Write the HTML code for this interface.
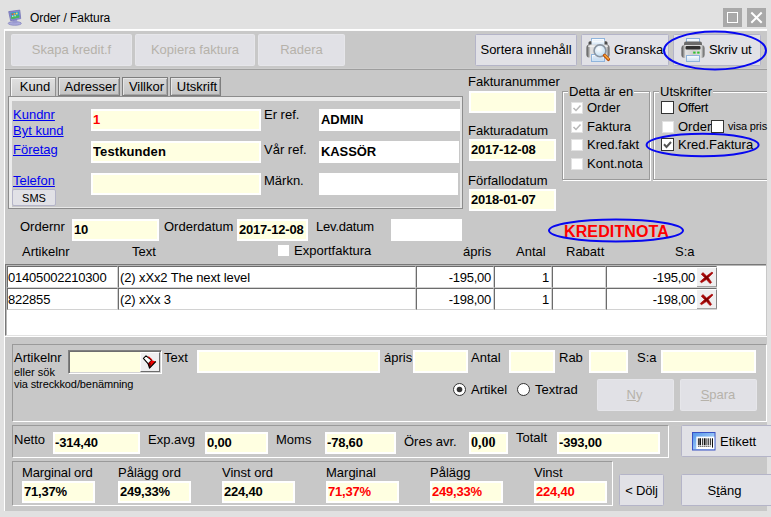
<!DOCTYPE html>
<html>
<head>
<meta charset="utf-8">
<title>Order / Faktura</title>
<style>
html,body{margin:0;padding:0;}
body{width:771px;height:517px;overflow:hidden;background:#e1e1e1;font-family:"Liberation Sans",sans-serif;font-size:13px;color:#000;position:relative;}
*{box-sizing:border-box;}
.a{position:absolute;white-space:nowrap;}
.l{position:absolute;white-space:nowrap;line-height:15px;height:15px;font-size:13px;}
.s{font-size:11px;line-height:12px;height:12px;}
.lk{color:#0000f0;text-decoration:underline;}
.in{position:absolute;background:#ffffe1;border:2px solid #fff;font-weight:bold;font-size:13px;line-height:17px;padding-left:0;white-space:nowrap;overflow:hidden;letter-spacing:-.2px;}
.w{background:#fff;}
.red{color:#f00;}
.btn{position:absolute;background:#e1e1e6;border:1px solid #b4b4c8;border-radius:1.5px;text-align:center;font-size:13px;white-space:nowrap;}
.dis{color:#b6b2aa;border-color:#e6e6ea;}
.pan{position:absolute;border:1px solid;border-color:#9a9a9a #fff #fff #9a9a9a;}
.cell{position:absolute;background:#fff;border:1px solid;border-color:#6c6c6c #d2d2d2 #d2d2d2 #6c6c6c;font-size:13px;line-height:17px;height:22px;padding:2px 2px 0 1px;white-space:nowrap;overflow:hidden;}
.r{letter-spacing:-.25px;}
.r{text-align:right;}
.cb{position:absolute;width:13px;height:13px;background:#fff;border:1px solid #333;}
.cbd{position:absolute;width:12px;height:12px;background:#fff;border:1px solid #e2e2e2;}
.tab{position:absolute;top:77px;height:19px;border:1px solid #7e7e7e;font-size:13px;line-height:17px;text-align:center;padding-left:3px;background:linear-gradient(#d8d8d8,#c4c4c4);box-shadow:inset 1px 1px 0 #e6e6e6, inset -1px -1px 0 #a6a6a6;}
</style>
</head>
<body>
<!-- title bar -->
<svg class="a" style="left:7px;top:9px" width="16" height="18" viewBox="7 9 16 18">
  <ellipse cx="14.8" cy="23.4" rx="6.6" ry="1.9" fill="#a9a9dc" stroke="#7878b4" stroke-width=".6"/>
  <path d="M12.8 20 L17 19.4 L17.6 23 L12.4 23.4 Z" fill="#9a9ad0"/>
  <path d="M8.7 11.6 L19.8 10.1 L20.7 18.6 L10.6 20.7 Z" fill="#8c8cd2" stroke="#6a6ab0" stroke-width=".7" stroke-linejoin="round"/>
  <path d="M10.3 12.8 L18.8 11.6 L19.4 17.6 L11.5 19.2 Z" fill="#2aa0c8"/>
  <path d="M11 16.6 L19.3 15.2 L19.4 17.6 L11.5 19.2 Z" fill="#4ab85a"/>
  <rect x="11.6" y="13.4" width="1.6" height="1.8" fill="#e05040"/><rect x="13.8" y="13" width="1.6" height="1.8" fill="#f0a030"/><rect x="16" y="12.6" width="1.6" height="1.8" fill="#f0e060"/>
  <rect x="12" y="15.6" width="1.4" height="1.2" fill="#fff" opacity=".8"/><rect x="14.4" y="15.2" width="1.4" height="1.2" fill="#fff" opacity=".8"/>
</svg>
<div class="a" style="left:30px;top:11px;font-size:12px;line-height:15px;letter-spacing:-.08px">Order / Faktura</div>
<div class="a" style="left:723px;top:8px;width:19px;height:19px;background:#a9a9a9"></div>
<div class="a" style="left:727px;top:12px;width:11px;height:11px;border:1px solid #fff"></div>
<div class="a" style="left:747px;top:8px;width:19px;height:19px;background:#a9a9a9"></div>
<svg class="a" style="left:747px;top:8px" width="19" height="19"><path d="M4.3 4.5 L14.7 14.7 M14.7 4.5 L4.3 14.7" stroke="#fff" stroke-width="2" fill="none"/></svg>

<!-- main panel -->
<div class="a" style="left:4px;top:29px;width:763px;height:482px;background:#c8c8c8;border-left:1px solid #fff;border-top:1px solid #fff;"></div>

<div class="a" style="left:5px;top:30px;width:762px;height:1px;background:#fbfbfb"></div>
<!-- toolbar -->
<div class="btn dis" style="left:11px;top:34px;width:121px;height:32px;line-height:30px;">Skapa kredit.f</div>
<div class="btn dis" style="left:135px;top:34px;width:120px;height:32px;line-height:30px;">Kopiera faktura</div>
<div class="btn dis" style="left:258px;top:34px;width:87px;height:32px;line-height:30px;">Radera</div>
<div class="btn" style="left:475px;top:34px;width:102px;height:32px;line-height:30px;">Sortera innehåll</div>
<div class="btn" style="left:581px;top:34px;width:88px;height:32px;line-height:30px;text-align:left;padding-left:32px">Granska</div>
<svg class="a" style="left:586px;top:38px" width="24" height="24" viewBox="0 0 24 24">
 <defs><linearGradient id="pb" x1="0" y1="0" x2="1" y2="0"><stop offset="0" stop-color="#4a4a4a"/><stop offset=".18" stop-color="#e4e4e4"/><stop offset=".5" stop-color="#cfcfcf"/><stop offset=".85" stop-color="#dedede"/><stop offset="1" stop-color="#555"/></linearGradient>
 <linearGradient id="pp" x1="0" y1="0" x2="0" y2="1"><stop offset="0" stop-color="#fff"/><stop offset="1" stop-color="#c4dcf2"/></linearGradient>
 <radialGradient id="gl" cx=".4" cy=".35" r=".7"><stop offset="0" stop-color="#fff"/><stop offset="1" stop-color="#b8d8f0"/></radialGradient></defs>
 <rect x="5.5" y=".5" width="13" height="8" fill="url(#pp)" stroke="#8fb4dc"/>
 <path d="M7 3H17M7 5H17" stroke="#b8d0ea" stroke-width=".7"/>
 <rect x="2.5" y="3.2" width="19" height="7" rx="1.6" fill="#4c4c4c"/>
 <rect x="5.5" y="2.6" width="13" height="5" fill="url(#pp)"/>
 <rect x=".5" y="6.6" width="23" height="13" rx="3.2" fill="url(#pb)"/>
 <rect x="2" y="7.4" width="20" height="1.6" rx=".8" fill="#f4f4f4" opacity=".8"/>
 <rect x="5.5" y="16.5" width="13" height="7" fill="url(#pp)" stroke="#8fb4dc"/>
 <path d="M7 19H17M7 21H17" stroke="#b8d0ea" stroke-width=".7"/>
 <circle cx="14" cy="12.8" r="5.9" fill="url(#gl)" stroke="#8a95a2" stroke-width="1.6"/>
 <path d="M18.6 17.4 L22.4 21.4" stroke="#b84c08" stroke-width="3.3" stroke-linecap="round"/>
 <path d="M18.8 17.2 L22.4 21" stroke="#f8a838" stroke-width="1.5" stroke-linecap="round"/>
</svg>
<div class="btn" style="left:673px;top:34px;width:88px;height:32px;line-height:30px;text-align:left;padding-left:35px;letter-spacing:-.1px">Skriv ut</div>
<svg class="a" style="left:681px;top:38px" width="24" height="24" viewBox="0 0 24 24">
 <rect x="5.5" y=".5" width="13" height="7" fill="url(#pp)" stroke="#8fb4dc"/>
 <rect x="3" y="3.5" width="18" height="8" rx="2" fill="#6a6a6a"/>
 <rect x=".5" y="7" width="23" height="13" rx="3.2" fill="url(#pb)"/>
 <rect x="4.5" y="8" width="15" height="3.6" rx="1" fill="#303030"/>
 <rect x="12.2" y="13.6" width="2.4" height="2" fill="#30c030"/><rect x="16.2" y="13.6" width="2.4" height="2" fill="#30c030"/>
 <rect x="5.5" y="17.5" width="13" height="6" fill="url(#pp)" stroke="#8fb4dc"/>
</svg>
<div class="a" style="left:5px;top:69px;width:762px;height:1px;background:#9e9e9e"></div>
<div class="a" style="left:5px;top:68px;width:762px;height:1px;background:#cdcdcd"></div>

<!-- tabs -->
<div class="a" style="left:8px;top:96px;width:455px;height:113px;border:1px solid #8c8c8c;"></div>
<div class="a" style="left:9px;top:97px;width:453px;height:4px;background:#ebebeb"></div>
<div class="a" style="left:9px;top:97px;width:3px;height:111px;background:#ebebeb"></div>
<div class="a" style="left:460px;top:97px;width:2px;height:111px;background:#e4e4e4"></div>
<div class="a" style="left:9px;top:207px;width:453px;height:1px;background:#e8e8e8"></div>
<div class="tab" style="left:10px;width:46px;padding-left:4px;border-color:#909090;border-bottom:none;box-shadow:inset 1px 1px 0 #f6f6f6;background:linear-gradient(#e0e0e0,#cdcdcd)">Kund</div>
<div class="tab" style="left:58px;width:62px;">Adresser</div>
<div class="tab" style="left:122px;width:46px;">Villkor</div>
<div class="tab" style="left:170px;width:51px;">Utskrift</div>
<div class="l lk" style="left:13px;top:107px">Kundnr</div>
<div class="l lk" style="left:13px;top:123px">Byt kund</div>
<div class="l lk" style="left:13px;top:142px">Företag</div>
<div class="l lk" style="left:13px;top:173px">Telefon</div>
<div class="btn" style="left:12px;top:189px;width:44px;height:17px;font-size:11px;line-height:16px;border-radius:2px">SMS</div>
<div class="in red" style="left:91px;top:109px;width:170px;height:22px">1</div>
<div class="in" style="left:91px;top:141px;width:170px;height:22px;letter-spacing:.1px">Testkunden</div>
<div class="in" style="left:91px;top:173px;width:170px;height:22px"></div>
<div class="l" style="left:264px;top:107px">Er ref.</div>
<div class="l" style="left:264px;top:142px">Vår ref.</div>
<div class="l" style="left:264px;top:173px">Märkn.</div>
<div class="in w" style="left:319px;top:109px;width:141px;height:22px;letter-spacing:-.05px">ADMIN</div>
<div class="in w" style="left:319px;top:141px;width:140px;height:22px;letter-spacing:-.1px">KASSÖR</div>
<div class="in w" style="left:319px;top:173px;width:139px;height:22px"></div>

<!-- faktura fields -->
<div class="l" style="left:468px;top:74px">Fakturanummer</div>
<div class="in" style="left:469px;top:91px;width:87px;height:22px"></div>
<div class="l" style="left:468px;top:123px">Fakturadatum</div>
<div class="in" style="left:469px;top:139px;width:87px;height:22px">2017-12-08</div>
<div class="l" style="left:468px;top:173px">Förfallodatum</div>
<div class="in" style="left:469px;top:189px;width:87px;height:22px">2018-01-07</div>

<!-- group: Detta är en -->
<div class="a" style="left:562px;top:91px;width:88px;height:89px;border:1px solid #9a9a9a;box-shadow:inset 1px 1px 0 #fff,1px 1px 0 #fff"></div>
<div class="l" style="left:568px;top:84px;background:#c8c8c8;padding:0 1px">Detta är en</div>
<div class="cbd" style="left:571px;top:102px"></div>
<div class="cbd" style="left:571px;top:121px"></div>
<div class="cbd" style="left:571px;top:139px"></div>
<div class="cbd" style="left:571px;top:158px"></div>
<svg class="a" style="left:571px;top:102px" width="12" height="12"><path d="M2.5 6 L5 8.5 L9.5 3.5" stroke="#b8b8b8" stroke-width="1.5" fill="none"/></svg>
<svg class="a" style="left:571px;top:121px" width="12" height="12"><path d="M2.5 6 L5 8.5 L9.5 3.5" stroke="#b8b8b8" stroke-width="1.5" fill="none"/></svg>
<div class="l" style="left:587px;top:100px">Order</div>
<div class="l" style="left:587px;top:119px">Faktura</div>
<div class="l" style="left:587px;top:137px">Kred.fakt</div>
<div class="l" style="left:587px;top:156px">Kont.nota</div>

<!-- group: Utskrifter -->
<div class="a" style="left:653px;top:91px;width:114px;height:89px;border:1px solid #9a9a9a;border-right:none;box-shadow:inset 1px 1px 0 #fff,0 1px 0 #fff"></div>
<div class="l" style="left:659px;top:84px;background:#c8c8c8;padding:0 1px">Utskrifter</div>
<div class="cb" style="left:661px;top:101px"></div>
<div class="cbd" style="left:662px;top:121px"></div>
<div class="cb" style="left:711px;top:120px"></div>
<div class="cb" style="left:661px;top:138px"></div>
<svg class="a" style="left:661px;top:138px" width="13" height="13"><path d="M3 6.3 L5.5 9 L10 4" stroke="#555" stroke-width="2" fill="none"/></svg>
<div class="l" style="left:678px;top:100px;letter-spacing:-.4px">Offert</div>
<div class="l" style="left:678px;top:119px">Order</div>
<div class="l s" style="left:728px;top:120px;letter-spacing:-.15px">visa pris</div>
<div class="l" style="left:678px;top:137px">Kred.Faktura</div>

<!-- order row -->
<div class="l" style="left:20px;top:219px">Ordernr</div>
<div class="in" style="left:72px;top:219px;width:87px;height:22px">10</div>
<div class="l" style="left:164px;top:219px">Orderdatum</div>
<div class="in" style="left:237px;top:219px;width:71px;height:22px">2017-12-08</div>
<div class="l" style="left:316px;top:219px;letter-spacing:-.2px">Lev.datum</div>
<div class="in w" style="left:391px;top:219px;width:71px;height:22px"></div>
<div class="a" style="left:549px;top:232px;font-weight:bold;font-size:16px;color:#f00;line-height:18px;top:223px;left:564px;letter-spacing:.13px">KREDITNOTA</div>

<!-- grid header -->
<div class="l" style="left:22px;top:244px">Artikelnr</div>
<div class="l" style="left:132px;top:244px">Text</div>
<div class="cbd" style="left:278px;top:245px;width:11px;height:11px;border:none"></div>
<div class="l" style="left:294px;top:243px">Exportfaktura</div>
<div class="l" style="left:463px;top:244px">ápris</div>
<div class="l" style="left:516px;top:244px">Antal</div>
<div class="l" style="left:566px;top:244px">Rabatt</div>
<div class="l" style="left:675px;top:244px">S:a</div>

<!-- grid -->
<div class="a" style="left:5px;top:264px;width:761px;height:72px;background:#fff;border-left:1px solid #787878;border-top:1px solid #787878;border-bottom:1px solid #e2e2e2"></div>
<div class="a" style="left:6px;top:265px;width:760px;height:1px;background:#b8b8b8"></div>
<div class="a" style="left:6px;top:265px;width:1px;height:70px;background:#b8b8b8"></div>
<div class="cell" style="left:7px;top:266px;width:111px;letter-spacing:-.2px;padding-left:0">01405002210300</div>
<div class="cell" style="left:118px;top:266px;width:298px;letter-spacing:-.12px">(2) xXx2 The next level</div>
<div class="cell r" style="left:416px;top:266px;width:78px">-195,00</div>
<div class="cell r" style="left:494px;top:266px;width:58px">1</div>
<div class="cell" style="left:552px;top:266px;width:54px"></div>
<div class="cell r" style="left:606px;top:266px;width:111px;padding-right:21px">-195,00</div>
<div class="cell" style="left:7px;top:288px;width:111px;letter-spacing:-.2px;padding-left:0">822855</div>
<div class="cell" style="left:118px;top:288px;width:298px;letter-spacing:-.12px">(2) xXx 3</div>
<div class="cell r" style="left:416px;top:288px;width:78px">-198,00</div>
<div class="cell r" style="left:494px;top:288px;width:58px">1</div>
<div class="cell" style="left:552px;top:288px;width:54px"></div>
<div class="cell r" style="left:606px;top:288px;width:111px;padding-right:21px">-198,00</div>
<div class="a" style="left:697px;top:268px;width:20px;height:19px;background:#efeff0;border-right:1px solid #858585;border-bottom:1px solid #a4a4a4"></div>
<svg class="a" style="left:697px;top:268px" width="19" height="19"><path d="M4.2 6.2 L6 4.6 L9.6 8 L15 4 L16 5 L11.4 9.6 L14.6 14.4 L13 15.6 L9.4 11.6 L4.4 14.8 L3.2 13.6 L7.6 9.6 Z" fill="#a80808" stroke="#a80808" stroke-width=".6" stroke-linejoin="round"/><path d="M7 7.4 L9.6 8.6 L11.8 7.2 L11 9.8 L12.6 12.4 L9.4 11 L7 12 L8 9.6 Z" fill="#7c0000"/></svg>
<div class="a" style="left:697px;top:290px;width:20px;height:19px;background:#efeff0;border-right:1px solid #858585;border-bottom:1px solid #a4a4a4"></div>
<svg class="a" style="left:697px;top:290px" width="19" height="19"><path d="M4.2 6.2 L6 4.6 L9.6 8 L15 4 L16 5 L11.4 9.6 L14.6 14.4 L13 15.6 L9.4 11.6 L4.4 14.8 L3.2 13.6 L7.6 9.6 Z" fill="#a80808" stroke="#a80808" stroke-width=".6" stroke-linejoin="round"/><path d="M7 7.4 L9.6 8.6 L11.8 7.2 L11 9.8 L12.6 12.4 L9.4 11 L7 12 L8 9.6 Z" fill="#7c0000"/></svg>

<!-- entry panel -->
<div class="a" style="left:5px;top:336px;width:762px;height:1px;background:#fff"></div>
<div class="pan" style="left:12px;top:344px;width:755px;height:78px;"></div>
<div class="l" style="left:14px;top:350px">Artikelnr</div>
<div class="l s" style="left:14px;top:366px">eller sök</div>
<div class="l s" style="left:14px;top:378px;letter-spacing:-.1px">via streckkod/benämning</div>
<div class="a" style="left:68px;top:350px;width:94px;height:24px;background:#ffffe1;border:1px solid;border-color:#808080 #fff #fff #808080;box-shadow:inset 1px 1px 0 #6e6e6e, inset -1px -1px 0 #d4d4d4"></div>
<div class="a" style="left:140px;top:352px;width:20px;height:20px;background:#efeff0;border:1px solid;border-color:#fff #6c6c6c #6c6c6c #fff"></div>
<svg class="a" style="left:140px;top:351.5px" width="20" height="20"><path d="M3.4 6.3 L6 3.9 L11.8 8.2 L8.2 11.8 Z" fill="#fff" stroke="#000" stroke-width="1.1" stroke-linejoin="round"/><path d="M8.2 11.8 L11.8 8.2 L15.8 9.5 L9.5 16.1 Z" fill="#f00000" stroke="none"/><path d="M8.2 11.8 L10.8 10.4 L10.6 15 L9.5 16.1 Z" fill="#7a0000"/><path d="M8.2 11.8 L9.5 16.1 L15.8 9.5" fill="none" stroke="#000" stroke-width="1.1" stroke-linejoin="round"/><path d="M8.4 4.6 L11.9 7.8" stroke="#f00000" stroke-width="1.1"/></svg>
<div class="l" style="left:164px;top:350px">Text</div>
<div class="in" style="left:197px;top:350px;width:183px;height:23px"></div>
<div class="l" style="left:384px;top:350px">ápris</div>
<div class="in" style="left:413px;top:350px;width:55px;height:23px"></div>
<div class="l" style="left:471px;top:350px">Antal</div>
<div class="in" style="left:509px;top:350px;width:46px;height:23px"></div>
<div class="l" style="left:559px;top:350px">Rab</div>
<div class="in" style="left:589px;top:350px;width:39px;height:23px"></div>
<div class="l" style="left:637px;top:350px">S:a</div>
<div class="in" style="left:661px;top:350px;width:95px;height:23px"></div>
<!-- radios -->
<svg class="a" style="left:452px;top:382px" width="15" height="15"><circle cx="7.5" cy="7.5" r="6" fill="#fff" stroke="#333" stroke-width="1"/><circle cx="7.5" cy="7.5" r="2.8" fill="#333"/></svg>
<div class="l" style="left:471px;top:382px">Artikel</div>
<svg class="a" style="left:516px;top:382px" width="15" height="15"><circle cx="7.5" cy="7.5" r="6" fill="#fff" stroke="#333" stroke-width="1"/></svg>
<div class="l" style="left:535px;top:382px">Textrad</div>
<div class="btn dis" style="left:597px;top:379px;width:77px;height:32px;line-height:30px;padding-right:2px"><u>N</u>y</div>
<div class="btn dis" style="left:680px;top:379px;width:77px;height:32px;line-height:30px;padding-right:1px"><u>S</u>para</div>

<!-- totals panel -->
<div class="pan" style="left:12px;top:425px;width:657px;height:33px"></div>
<div class="l" style="left:14px;top:432px">Netto</div>
<div class="in" style="left:53px;top:432px;width:87px;height:22px">-314,40</div>
<div class="l" style="left:148px;top:432px">Exp.avg</div>
<div class="in" style="left:205px;top:432px;width:63px;height:22px">0,00</div>
<div class="l" style="left:276px;top:432px">Moms</div>
<div class="in" style="left:325px;top:432px;width:71px;height:22px">-78,60</div>
<div class="l" style="left:404px;top:434px">Öres avr.</div>
<div class="in" style="left:469px;top:432px;width:39px;height:22px;font-family:'Liberation Serif',serif;font-size:14px;line-height:18px;letter-spacing:0">0,00</div>
<div class="l" style="left:516px;top:430px">Totalt</div>
<div class="in" style="left:557px;top:432px;width:103px;height:22px">-393,00</div>
<div class="btn" style="left:681px;top:425px;width:95px;height:32px;line-height:30px;padding-top:1px;text-align:left;padding-left:38px">Etikett</div>
<svg class="a" style="left:692px;top:432px" width="24" height="19" viewBox="0 0 24 19">
 <defs><linearGradient id="eb" x1="0" y1="0" x2="1" y2="1"><stop offset="0" stop-color="#4f93ea"/><stop offset=".6" stop-color="#9cc8f6"/><stop offset="1" stop-color="#c4e0fa"/></linearGradient></defs>
 <rect x=".5" y=".5" width="22.5" height="17.5" fill="url(#eb)" stroke="#3a52c4"/>
 <rect x="4.3" y="4.6" width="18" height="12.4" fill="#fff"/>
 <path d="M6.4 6.3V13.3 M10.6 6.3V13.3 M14.9 6.3V13.3 M16.7 6.3V13.3 M18.6 6.3V13.3" stroke="#111" stroke-width=".9"/>
 <path d="M8.2 6.3V13.3 M12.7 6.3V13.3" stroke="#111" stroke-width="1.7"/>
 <path d="M20.5 6.3V15.6" stroke="#111" stroke-width="1"/>
 <path d="M6 14.4H18.6" stroke="#555" stroke-width=".9" stroke-dasharray="1.5 .5"/>
</svg>

<!-- margin panel -->
<div class="pan" style="left:12px;top:461px;width:601px;height:45px"></div>
<div class="l" style="left:22px;top:465px;letter-spacing:-.15px">Marginal ord</div>
<div class="in" style="left:22px;top:481px;width:73px;height:22px">71,37%</div>
<div class="l" style="left:118px;top:465px">Pålägg ord</div>
<div class="in" style="left:118px;top:481px;width:73px;height:22px">249,33%</div>
<div class="l" style="left:222px;top:465px">Vinst ord</div>
<div class="in" style="left:222px;top:481px;width:73px;height:22px">224,40</div>
<div class="l" style="left:326px;top:465px">Marginal</div>
<div class="in red" style="left:326px;top:481px;width:73px;height:22px">71,37%</div>
<div class="l" style="left:430px;top:465px">Pålägg</div>
<div class="in red" style="left:430px;top:481px;width:73px;height:22px">249,33%</div>
<div class="l" style="left:534px;top:465px">Vinst</div>
<div class="in red" style="left:534px;top:481px;width:73px;height:22px">224,40</div>
<div class="btn" style="left:619px;top:474px;width:45px;height:32px;line-height:30px;padding-top:1px;letter-spacing:-.2px">&lt; Dölj</div>
<div class="btn" style="left:681px;top:474px;width:95px;height:32px;line-height:30px;padding-top:1px;padding-right:8px">S<u>t</u>äng</div>

<!-- annotation ellipses -->
<svg class="a" style="left:0;top:0" width="771" height="517">
  <ellipse cx="715" cy="50.5" rx="51" ry="19" fill="none" stroke="#0808f0" stroke-width="2"/>
  <ellipse cx="702.6" cy="145" rx="56" ry="11.3" fill="none" stroke="#0808f0" stroke-width="2"/>
  <ellipse cx="616" cy="230.5" rx="67" ry="11" fill="none" stroke="#0808f0" stroke-width="2"/>
</svg>
</body>
</html>
